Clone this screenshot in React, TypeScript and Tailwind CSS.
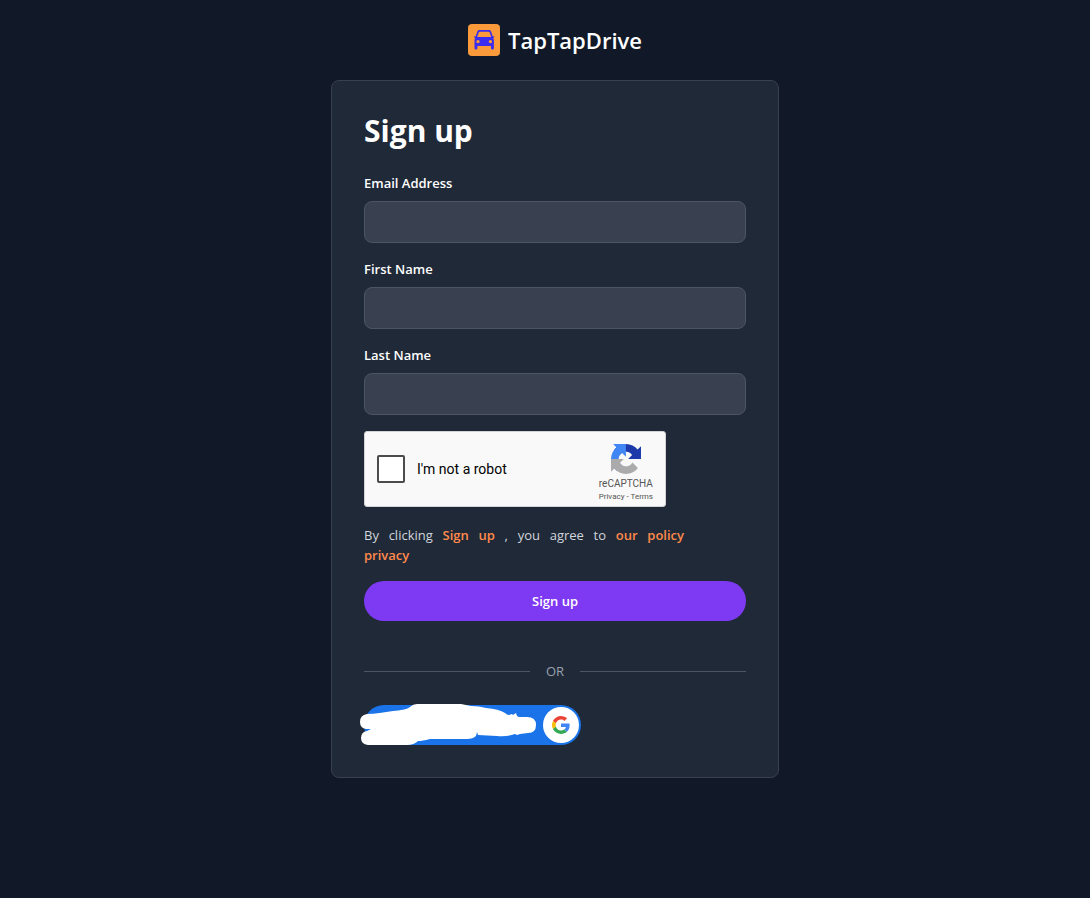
import type { ReactNode } from "react";

function CarLogo() {
  return (
    <svg viewBox="0 0 32 32" className="h-8 w-8" aria-hidden="true">
      <rect width="32" height="32" rx="4" fill="#fb9a3a" />
      <path
        fill="#3a2df0"
        fillRule="evenodd"
        d="M11.5 6h9.4c1.2 0 1.900.6 2.300 1.700l1.500 4.500h.8c.9 0 1 1.300.2 1.600l-.7.3c.7.7.9 1.400.9 2.300V24c0 2-2.900 2-2.900 0v-1.900H9.400V24c0 2-2.900 2-2.900 0v-7.600c0-.9.2-1.600.9-2.300l-.7-.3c-.8-.3-.7-1.600.2-1.600h.8l1.500-4.500C9.600 6.600 10.300 6 11.500 6Zm.3 1.700c-.6 0-.9.2-1.100.7L9.200 12.900h14l-1.500-4.500c-.2-.5-.5-.7-1.100-.7ZM10 15.900a1.700 1.700 0 1 0 0 3.400 1.700 1.700 0 0 0 0-3.400Zm12.400 0a1.700 1.700 0 1 0 0 3.400 1.700 1.700 0 0 0 0-3.400Z"
      />
    </svg>
  );
}

function RecaptchaLogo() {
  return (
    <svg viewBox="0 0 64 64" className="h-[30px] w-[30px]" aria-hidden="true">
      <path
        fill="#1c3aa9"
        d="M64 31.955l-.033-1.37V4.687l-7.16 7.16C50.948 4.674 42.033.093 32.05.093c-10.4 0-19.622 4.96-25.458 12.64l11.736 11.86a15.55 15.55 0 0 1 4.754-5.334c2.05-1.6 4.952-2.906 8.968-2.906.485 0 .86.057 1.135.163 4.976.393 9.288 3.14 11.828 7.124l-8.307 8.307L64 31.953"
      />
      <path
        fill="#4285f4"
        d="M31.862.094l-1.37.033H4.594l7.16 7.16C4.58 13.147 0 22.06 0 32.046c0 10.4 4.96 19.622 12.64 25.458L24.5 45.768a15.55 15.55 0 0 1-5.334-4.754c-1.6-2.05-2.906-4.952-2.906-8.968 0-.485.057-.86.163-1.135.393-4.976 3.14-9.288 7.124-11.828l8.307 8.307L31.86.095"
      />
      <path
        fill="#ababab"
        d="M.001 32.045l.033 1.37v25.898l7.16-7.16c5.86 7.173 14.774 11.754 24.76 11.754 10.4 0 19.622-4.96 25.458-12.64l-11.736-11.86a15.55 15.55 0 0 1-4.754 5.334c-2.05 1.6-4.952 2.906-8.968 2.906-.485 0-.86-.057-1.135-.163-4.976-.393-9.288-3.14-11.828-7.124l8.307-8.307c-10.522.04-22.4.066-27.295-.005"
      />
    </svg>
  );
}

function GoogleLogo() {
  return (
    <svg viewBox="0 0 48 48" className="h-[18px] w-[18px]" aria-hidden="true">
      <path fill="#EA4335" d="M24 9.5c3.54 0 6.71 1.22 9.21 3.6l6.85-6.85C35.9 2.38 30.47 0 24 0 14.62 0 6.51 5.38 2.56 13.22l7.98 6.19C12.43 13.72 17.74 9.5 24 9.5z" />
      <path fill="#4285F4" d="M46.98 24.55c0-1.57-.15-3.09-.38-4.55H24v9.02h12.94c-.58 2.96-2.26 5.48-4.78 7.18l7.73 6c4.51-4.18 7.09-10.36 7.09-17.65z" />
      <path fill="#FBBC05" d="M10.53 28.59c-.48-1.45-.76-2.99-.76-4.59s.27-3.14.76-4.59l-7.98-6.19C.92 16.46 0 20.12 0 24c0 3.88.92 7.54 2.56 10.78l7.97-6.19z" />
      <path fill="#34A853" d="M24 48c6.48 0 11.93-2.13 15.89-5.81l-7.73-6c-2.15 1.45-4.92 2.3-8.16 2.3-6.26 0-11.57-4.22-13.47-9.91l-7.98 6.19C6.51 42.62 14.62 48 24 48z" />
    </svg>
  );
}

function Field({ id, label, type = "text" }: { id: string; label: string; type?: string }) {
  return (
    <div>
      <label htmlFor={id} className="mb-2 block text-[13px] leading-5 font-semibold text-white">
        {label}
      </label>
      <input
        id={id}
        type={type}
        className="block h-[42px] w-full rounded-lg border border-[#4b5563] bg-[#394150] px-3 text-[13px] text-white outline-none focus:border-violet-500"
      />
    </div>
  );
}

function Accent({ children }: { children: ReactNode }) {
  return <a href="#policy" className="font-semibold text-[#ff8a4c]">{children}</a>;
}

function Recaptcha() {
  return (
    <div className="flex h-[76px] w-[302px] max-w-full items-center justify-between rounded-[3px] border border-[#d3d3d3] bg-[#f9f9f9] pr-3 pl-3 font-['Roboto',sans-serif]">
      <label className="flex items-center gap-3 text-sm text-black">
        <input type="checkbox" className="h-7 w-7 appearance-none rounded-[2px] border-2 border-[#4b4b4b] bg-white checked:bg-green-600" />
        I'm not a robot
      </label>
      <div className="flex flex-col items-center pt-2 text-[#555]">
        <RecaptchaLogo />
        <span className="mt-1 text-[10px] leading-3">reCAPTCHA</span>
        <span className="mt-px text-[8px] leading-3">
          <a href="#privacy">Privacy</a> - <a href="#terms">Terms</a>
        </span>
      </div>
    </div>
  );
}

export default function App() {
  return (
    <main className="flex min-h-screen flex-col items-center bg-[#111827] py-6 pl-5 font-['Open_Sans','Noto_Sans',sans-serif]">
      <a href="#home" className="mb-6 flex items-center gap-2 text-[22px] leading-8 font-semibold text-white">
        <CarLogo />
        <span>TapTapDrive</span>
      </a>

      <section className="w-full max-w-md rounded-lg border border-[#374151] bg-[#1f2937] p-8">
        <h1 className="mb-6 text-3xl leading-9 font-bold text-white">Sign up</h1>
        <form className="flex flex-col gap-4" onSubmit={(e) => e.preventDefault()}>
          <Field id="email" label="Email Address" type="email" />
          <Field id="first-name" label="First Name" />
          <Field id="last-name" label="Last Name" />
          <Recaptcha />
          <p className="mt-0.5 max-w-80 text-justify text-[13px] leading-5 text-gray-300 [text-align-last:justify]">
            By clicking <Accent>Sign up</Accent> , you agree to{" "}
            <Accent>
              our policy
              <br />
              privacy
            </Accent>
          </p>
          <button type="submit" className="h-10 w-full rounded-full bg-[#7e3af2] text-[13px] leading-5 font-semibold text-white">
            Sign up
          </button>
        </form>

        <div className="mt-10 mb-6 flex items-center gap-4 text-[13px] leading-5 text-gray-400">
          <span className="h-px flex-1 bg-gray-600" />
          OR
          <span className="h-px flex-1 bg-gray-600" />
        </div>

        <button
          type="button"
          aria-label="Google"
          className="relative flex h-10 w-[217px] items-center justify-end rounded-full bg-[#1a73e8] pr-0.5"
        >
          <svg viewBox="0 0 180 44" className="absolute -top-0.5 -left-1 h-11 w-[180px]" aria-hidden="true">
            <path
              fill="#fff"
              d="M7 11C15 11 24 9 33 8C41 7 46 7 50 4Q53 1 57 1H101Q106 2 111 3Q119 3 126 5Q139 6 145 10Q147 12 149 12L152 11L153 12L156 10L157 13Q158 14 160 14H167Q176 14 176 22Q176 30 168 30L160 31L157 32L155 31Q147 34 137 33L118 32L117 29L116 33Q113 36 107 36H70Q62 38 58 38Q54 42 47 42H8Q1 41 1 35Q1 29 7 28L11 26H6Q0 25 0 19Q0 12 7 11Z"
            />
          </svg>
          <span className="flex h-9 w-9 items-center justify-center rounded-full bg-white">
            <GoogleLogo />
          </span>
        </button>
      </section>
    </main>
  );
}
